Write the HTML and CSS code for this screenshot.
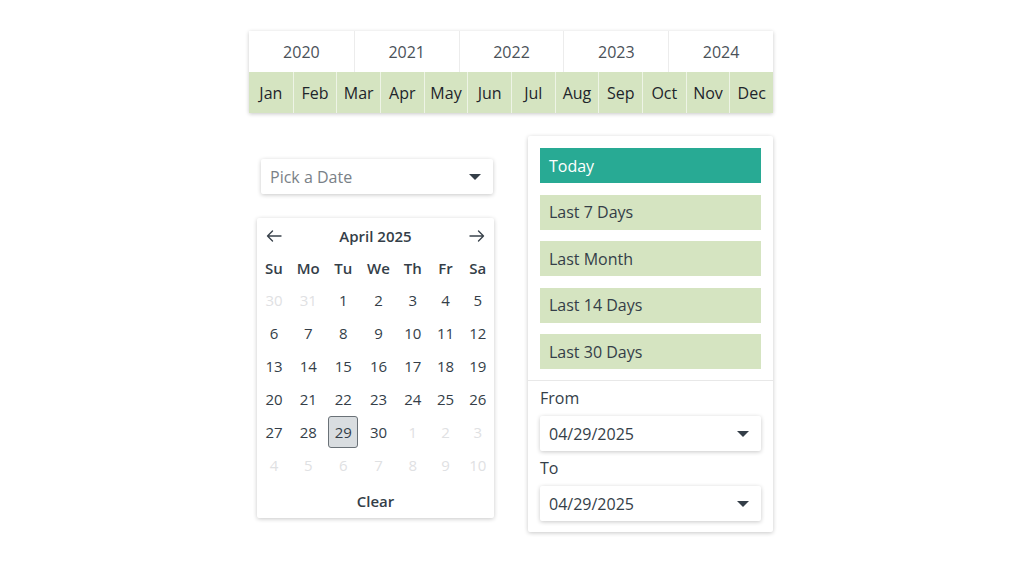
FILE: index.html
```html
<!DOCTYPE html>
<html>
<head>
<meta charset="utf-8">
<link rel="stylesheet" href="styles.css">
</head>
<body>
<div class="wrap">
  <div class="timeline">
    <div class="years">
      <div class="year">2020</div><div class="year">2021</div><div class="year">2022</div><div class="year">2023</div><div class="year">2024</div>
    </div>
    <div class="months">
      <div class="month">Jan</div><div class="month">Feb</div><div class="month">Mar</div><div class="month">Apr</div><div class="month">May</div><div class="month">Jun</div><div class="month">Jul</div><div class="month">Aug</div><div class="month">Sep</div><div class="month">Oct</div><div class="month">Nov</div><div class="month">Dec</div>
    </div>
  </div>
  <div class="row">
    <div class="left">
      <div class="select pick"><span class="placeholder">Pick a Date</span><span class="caret"></span></div>
      <div class="calendar">
        <div class="cal-head">
          <svg class="arrow" width="16" height="12" viewBox="0 0 16 12"><path d="M15 6H1.5M6.5 1L1.5 6l5 5" fill="none" stroke="#3a434c" stroke-width="1.4" stroke-linecap="round" stroke-linejoin="round"/></svg>
          <span class="month-title">April 2025</span>
          <svg class="arrow" width="16" height="12" viewBox="0 0 16 12"><path d="M1 6h13.5M9.5 1l5 5-5 5" fill="none" stroke="#3a434c" stroke-width="1.4" stroke-linecap="round" stroke-linejoin="round"/></svg>
        </div>
        <div class="grid">
          <div class="wd">Su</div><div class="wd">Mo</div><div class="wd">Tu</div><div class="wd">We</div><div class="wd">Th</div><div class="wd">Fr</div><div class="wd">Sa</div>
          <div class="d o">30</div><div class="d o">31</div><div class="d">1</div><div class="d">2</div><div class="d">3</div><div class="d">4</div><div class="d">5</div>
          <div class="d">6</div><div class="d">7</div><div class="d">8</div><div class="d">9</div><div class="d">10</div><div class="d">11</div><div class="d">12</div>
          <div class="d">13</div><div class="d">14</div><div class="d">15</div><div class="d">16</div><div class="d">17</div><div class="d">18</div><div class="d">19</div>
          <div class="d">20</div><div class="d">21</div><div class="d">22</div><div class="d">23</div><div class="d">24</div><div class="d">25</div><div class="d">26</div>
          <div class="d">27</div><div class="d">28</div><div class="d"><span class="sel">29</span></div><div class="d">30</div><div class="d o">1</div><div class="d o">2</div><div class="d o">3</div>
          <div class="d o">4</div><div class="d o">5</div><div class="d o">6</div><div class="d o">7</div><div class="d o">8</div><div class="d o">9</div><div class="d o">10</div>
        </div>
        <div class="clear">Clear</div>
      </div>
    </div>
    <div class="panel">
      <div class="ranges">
        <div class="range active">Today</div>
        <div class="range">Last 7 Days</div>
        <div class="range">Last Month</div>
        <div class="range">Last 14 Days</div>
        <div class="range">Last 30 Days</div>
      </div>
      <div class="fields">
        <div class="label">From</div>
        <div class="select"><span>04/29/2025</span><span class="caret"></span></div>
        <div class="label to">To</div>
        <div class="select"><span>04/29/2025</span><span class="caret"></span></div>
      </div>
    </div>
  </div>
</div>
</body>
</html>
```
FILE: styles.css
```css
* { box-sizing: border-box; }
html, body { margin: 0; padding: 0; background: #fff; }
body { font-family: "Open Sans", "Noto Sans", sans-serif; color: #343e48; font-size: 16px; }
.wrap { width: 524px; margin-left: 249px; padding-top: 31px; padding-bottom: 30px; }
.timeline { box-shadow: 0 1px 4px rgba(0,0,0,0.22); background: #fff; }
.years { display: grid; grid-template-columns: repeat(5, 1fr); height: 41px; }
.year { display: flex; align-items: center; justify-content: center; color: #4a5158; border-left: 1px solid #ececec; }
.year:first-child { border-left: none; }
.months { display: grid; grid-template-columns: repeat(12, 1fr); height: 41px; background: #d5e4c1; }
.month { display: flex; align-items: center; justify-content: center; color: #1e252b; border-left: 1px solid #eef4e6; }
.month:first-child { border-left: none; }
.row { display: flex; align-items: flex-start; margin-top: 23px; padding-left: 8px; gap: 34px; }
.left { width: 237px; padding-top: 23px; }
.select { height: 35px; background: #fff; box-shadow: 0 1px 4px rgba(0,0,0,0.22); border-radius: 2px; display: flex; align-items: center; justify-content: space-between; padding: 0 12px 0 9px; color: #343e48; }
.pick { margin: 0 1px 0 4px; }
.placeholder { color: #7a8187; }
.caret { width: 0; height: 0; border-left: 6px solid transparent; border-right: 6px solid transparent; border-top: 6px solid #343e48; }
.calendar { margin-top: 24px; background: #fff; box-shadow: 0 1px 4px rgba(0,0,0,0.22); border-radius: 2px; }
.cal-head { height: 35px; display: flex; align-items: center; justify-content: space-between; padding: 0 9px 0 9px; }
.month-title { font-weight: 600; font-size: 15px; }
.grid { display: grid; grid-template-columns: 34px 34.5px 35.5px 35px 33.5px 32px 32.5px; }
.wd { height: 30px; display: flex; align-items: center; justify-content: center; font-weight: 600; font-size: 15px; }
.d { height: 33px; display: flex; align-items: center; justify-content: center; font-size: 15px; }
.d.o { color: #dfe1e3; }
.sel { width: 30px; height: 32px; display: flex; align-items: center; justify-content: center; background: #d9dde0; border: 1px solid #6a7177; border-radius: 3px; }
.clear { height: 37px; display: flex; align-items: center; justify-content: center; font-weight: 600; font-size: 15px; padding-top: 3px; }
.panel { width: 245px; background: #fff; box-shadow: 0 1px 4px rgba(0,0,0,0.22); border-radius: 2px; }
.ranges { padding: 12px 12px 11px; display: flex; flex-direction: column; gap: 11.5px; border-bottom: 1px solid #e8e8e8; }
.range { height: 35px; background: #d5e4c1; display: flex; align-items: center; padding-left: 9px; color: #343e48; }
.range.active { background: #28aa94; color: #fff; }
.fields { padding: 6px 12px 11px; }
.label { height: 22px; display: flex; align-items: center; margin-bottom: 7px; }
.label.to { margin-top: 6px; }
```
